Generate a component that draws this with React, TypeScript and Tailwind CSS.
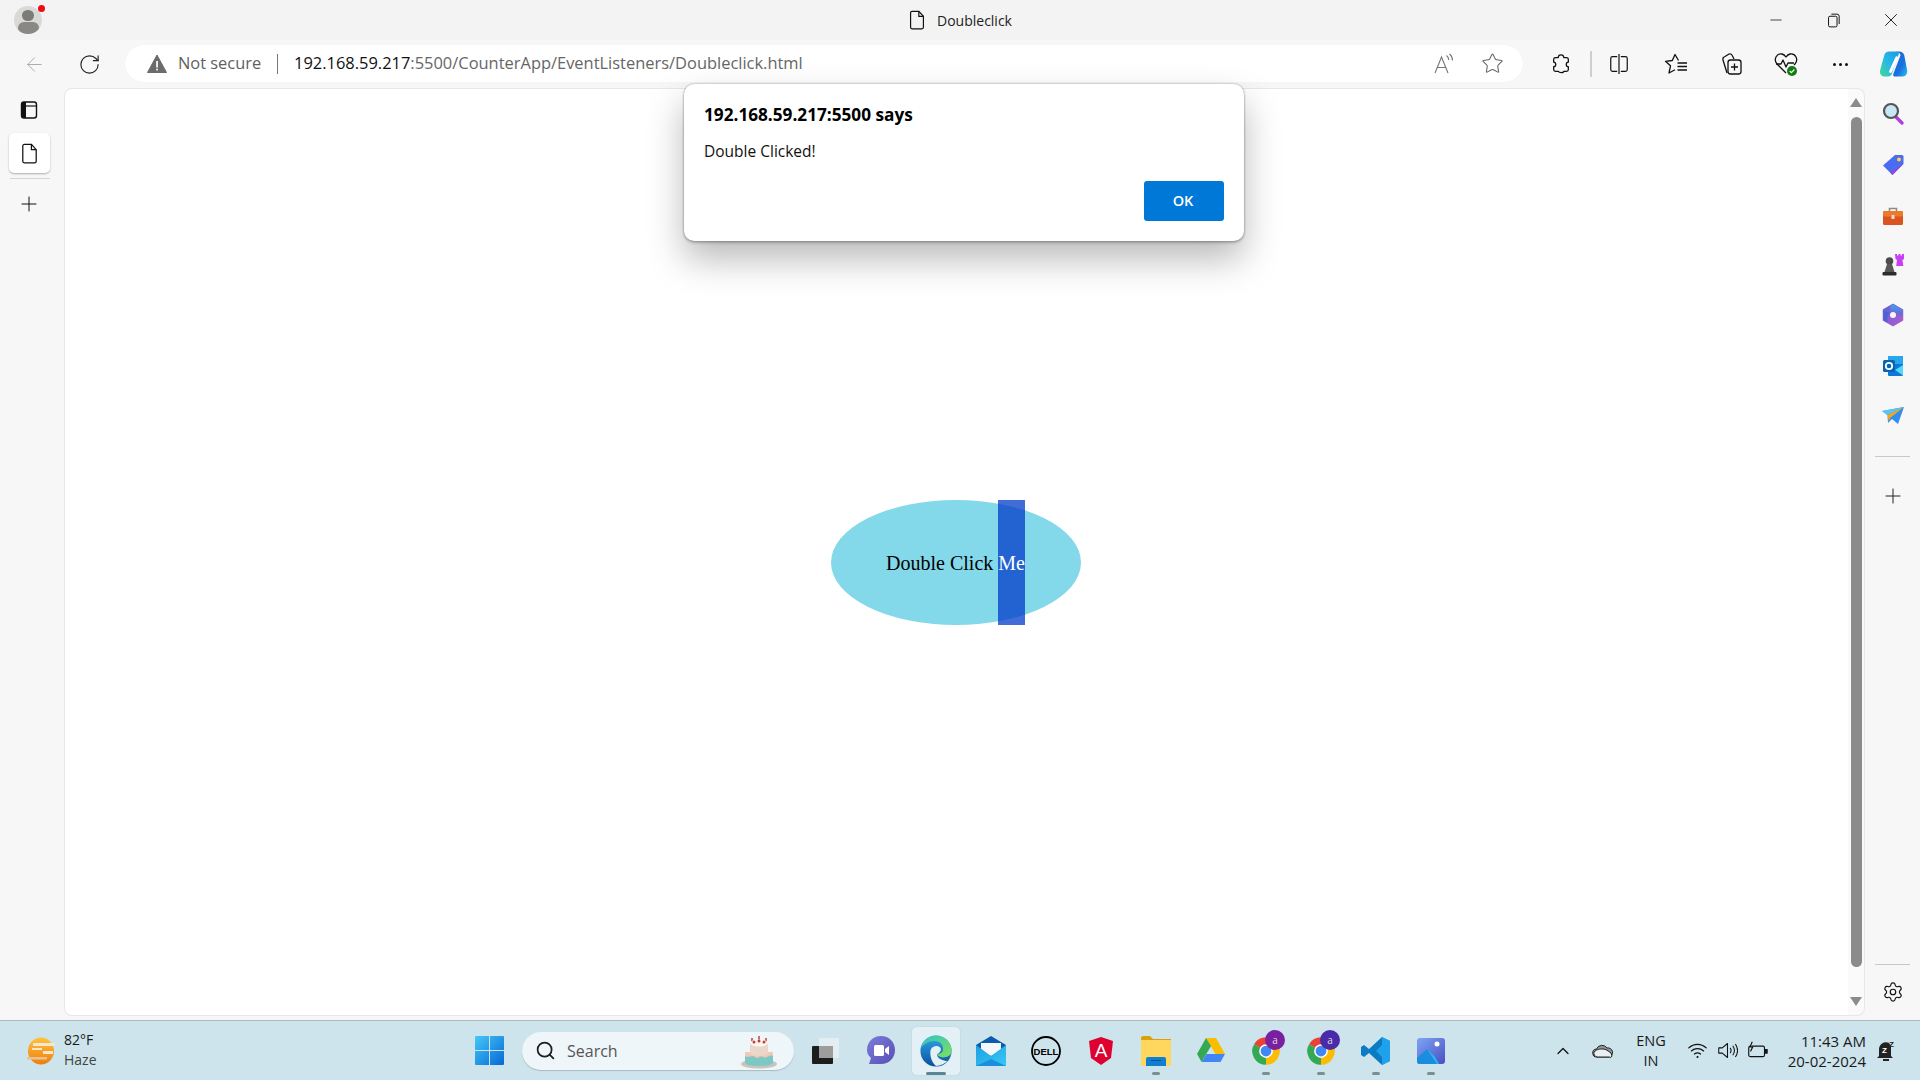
import React from "react";
import { ArrowLeft, RotateCw, Star, Plus, Settings, ChevronUp, Search, Minus, X } from "lucide-react";

const Slot = ({ w = "w-[55px]", children }: { w?: string; children: React.ReactNode }) => (
  <div className={`${w} h-full shrink-0 flex items-center justify-center relative`}>{children}</div>
);

const Pip = ({ active }: { active?: boolean }) => (
  <span className={`absolute bottom-[5px] left-1/2 -translate-x-1/2 h-[3px] rounded-full ${active ? "w-[20px] bg-[#5b8592]" : "w-[8px] bg-[#7c8d93]"}`} />
);

const S = ({ size = 20, vb = "0 0 24 24", children }: { size?: number; vb?: string; children: React.ReactNode }) => (
  <svg width={size} height={size} viewBox={vb} fill="none" stroke="none">{children}</svg>
);

const DocIcon = ({ size = 20, sw = 1.3 }: { size?: number; sw?: number }) => (
  <S size={size}>
    <path d="M6.500 2.500H14l5 5.500v12a1.700 1.700 0 0 1-1.700 1.700H6.700A1.700 1.700 0 0 1 5 20V4a1.500 1.500 0 0 1 1.500-1.500z" stroke="#111" strokeWidth={sw} />
    <path d="M14 2.500V8h5" stroke="#111" strokeWidth={sw} />
  </S>
);

const Copilot = () => (
  <S size={30}>
    <defs>
      <linearGradient id="cp1" x1="0" y1="0" x2="1" y2="1"><stop offset="0" stopColor="#1670c4" /><stop offset="0.6" stopColor="#1b6fe0" /><stop offset="1" stopColor="#28c4ee" /></linearGradient>
      <linearGradient id="cp2" x1="0" y1="1" x2="1" y2="0"><stop offset="0" stopColor="#45d98f" /><stop offset="0.5" stopColor="#26b8e8" /><stop offset="1" stopColor="#1a9ae0" /></linearGradient>
    </defs>
    <path d="M9 2h6c1.500 0 2 1 1.500 2.300L11 20c-.6 1.500-1.800 2-3 2H5c-2.500 0-4-2.500-3.300-5L5 5c.6-2 2-3 4-3z" fill="url(#cp2)" />
    <path d="M14 2h3c2 0 3.300 1 4 3l2.300 12c.5 2.500-1 5-3.500 5h-6c-1.500 0-2-1-1.500-2.300L18 5c-.6-2-2-3-4-3z" fill="url(#cp1)" />
    <path d="M15 7 10 18" stroke="#fff" strokeWidth="2.400" strokeLinecap="round" />
  </S>
);

const ProfileIcon = () => (
  <div className="relative w-[28px] h-[28px]">
    <div className="w-[28px] h-[28px] rounded-full bg-[#d9d9d7] overflow-hidden flex flex-col items-center">
      <div className="w-[12px] h-[12px] rounded-full bg-[#7d7b78] mt-[4px]" />
      <div className="w-[21px] h-[14px] rounded-full bg-[#8a8884] mt-[1px]" />
    </div>
    <div className="absolute top-[-1px] right-[-3px] w-[7px] h-[7px] rounded-full bg-[#ee0b14]" />
  </div>
);

const TitleBar = () => (
  <div className="h-[40px] bg-[#f3f3f3] flex items-center shrink-0">
    <div className="w-[56px] flex justify-center"><ProfileIcon /></div>
    <div className="flex-1 flex items-center ml-[850px] gap-[9px]">
      <DocIcon size={22} />
      <span className="text-[14px] text-[#222]">Doubleclick</span>
    </div>
    <div className="flex items-center h-full">
      <Slot w="w-[58px]"><Minus size={18} strokeWidth={1} color="#111" className="ml-[2px]" /></Slot>
      <Slot w="w-[58px]">
        <S size={17}>
          <rect x="5" y="6" width="12" height="15" rx="2" stroke="#111" strokeWidth="1.400" />
          <path d="M9 3h8a3 3 0 0 1 3 3v11" stroke="#111" strokeWidth="1.400" />
        </S>
      </Slot>
      <Slot w="w-[58px]"><X size={22} strokeWidth={1} color="#111" /></Slot>
    </div>
  </div>
);

const Toolbar = () => (
  <div className="h-[48px] bg-[#f7f7f7] flex items-center shrink-0 pl-[7px]">
    <Slot><ArrowLeft size={23} strokeWidth={1} color="#a8a8a8" /></Slot>
    <Slot><RotateCw size={23} strokeWidth={1.2} color="#222" /></Slot>
    <div className="ml-[8px] w-[1398px] h-[37px] -mt-[1px] bg-white rounded-full flex items-center shadow-[0_0_1px_rgba(0,0,0,0.06)] shrink-0">
      <svg className="ml-[22px]" width="20" height="20" viewBox="0 0 20 20">
        <path d="M10 1 19.500 18.500H.5z" fill="#6b6b6b" stroke="#6b6b6b" strokeLinejoin="round" />
        <rect x="9.200" y="7" width="1.700" height="6.500" fill="#fff" />
        <rect x="9.200" y="14.700" width="1.700" height="1.700" fill="#fff" />
      </svg>
      <span className="ml-[11px] text-[16.4px] text-[#5f5f5f] w-[99px] whitespace-nowrap">Not secure</span>
      <span className="w-[1px] h-[20px] bg-[#777]" />
      <span className="ml-[16px] text-[16.45px] text-[#666] whitespace-nowrap"><span className="text-[#111]">192.168.59.217</span>:5500/CounterApp/EventListeners/Doubleclick.html</span>
      <div className="flex-1" />
      <svg className="mr-[25px]" width="24" height="24" viewBox="0 0 24 24" fill="none" stroke="#777" strokeWidth="1.100">
        <path d="M3 21 9.500 5 16 21M5.500 15.500h8" />
        <path d="M14.500 3.500c1.500 1 2.200 2.500 2.200 4.500M17.500 2c2 1.500 3 3.500 3 6.500" />
      </svg>
      <Star size={23} strokeWidth={1.1} color="#666" className="mr-[19px]" />
    </div>
    <div className="ml-[10px] flex items-center h-full">
      <Slot>
        <svg width="22" height="22" viewBox="0 0 24 24" fill="none" stroke="#111" strokeWidth="1.400" strokeLinejoin="round">
          <path d="M9 5c0-4 6-4 6 0h3a2 2 0 0 1 2 2v3c-3 0-3 5 0 5v3a2 2 0 0 1-2 2h-3c0 2-5 2-6 0H6a2 2 0 0 1-2-2v-3c3 0 3-5 0-5V7a2 2 0 0 1 2-2z" />
        </svg>
      </Slot>
      <span className="ml-[2px] w-[2px] h-[26px] bg-[#cfcfcf]" />
      <Slot w="w-[54px]">
        <svg width="22" height="22" viewBox="0 0 24 24" fill="none" stroke="#111" strokeWidth="1.300">
          <path d="M10 4H5a2 2 0 0 0-2 2v12a2 2 0 0 0 2 2h5M14 4h5a2 2 0 0 1 2 2v12a2 2 0 0 1-2 2h-5M12 1v22" />
        </svg>
      </Slot>
      <div className="ml-[2px]" />
      <Slot>
        <svg width="24" height="24" viewBox="0 0 24 24" fill="none" stroke="#111" strokeWidth="1.300" strokeLinejoin="round">
          <path d="M14.500 8.500 11 2.500 8.300 8.500 1.500 9.300l5 4.500L5 21l6-3.200" />
          <path d="M13.500 11H23M13.500 14.500H23M13.500 18H23" />
        </svg>
      </Slot>
      <Slot>
        <svg width="24" height="24" viewBox="0 0 24 24" fill="none" stroke="#111" strokeWidth="1.300" strokeLinejoin="round">
          <path d="M8 21 4 8c-.5-2 .5-3 2-3.500L10 2c1.500-.5 3 .5 3.500 2L15 7" />
          <rect x="9" y="8" width="13" height="14" rx="2.500" />
          <path d="M15.500 11.500v7M12 15h7" />
        </svg>
      </Slot>
      <Slot>
        <svg width="26" height="26" viewBox="0 0 26 26" fill="none" stroke="#111" strokeWidth="1.300" strokeLinejoin="round">
          <path d="M13 22 4 13C0 8 4 2 9 3c2 .4 3 1.500 4 3 1-1.500 2-2.600 4-3 5-1 9 5 5 10l-1 1" />
          <path d="M3 13h5l2-4 3 7 2-4h6" />
          <circle cx="19" cy="20" r="5" fill="#107c10" stroke="none" />
          <path d="m16.800 20 1.600 1.700 3-3.200" stroke="#fff" strokeWidth="1.200" />
        </svg>
      </Slot>
      <Slot>
        <div className="flex gap-[3px]">
          <span className="w-[3px] h-[3px] rounded-full bg-[#111]" />
          <span className="w-[3px] h-[3px] rounded-full bg-[#111]" />
          <span className="w-[3px] h-[3px] rounded-full bg-[#111]" />
        </div>
      </Slot>
      <Slot w="w-[49px]"><Copilot /></Slot>
    </div>
  </div>
);

const LeftRail = () => (
  <div className="w-[64px] shrink-0 flex flex-col">
    <div className="w-[58px] flex justify-center pt-[12px]">
      <svg width="20" height="20" viewBox="0 0 20 20" fill="none">
        <rect x="2.500" y="2" width="15" height="16" rx="2.500" stroke="#111" strokeWidth="1.400" />
        <path d="M2.500 6h15" stroke="#111" strokeWidth="1.200" />
        <path d="M2.500 4.500a2.500 2.500 0 0 1 2.500-2.500h2v16H5a2.500 2.500 0 0 1-2.500-2.500z" fill="#111" />
      </svg>
    </div>
    <div className="ml-[9px] mt-[13px] w-[41px] h-[40px] rounded-[5px] bg-white shadow-[0_1px_2px_rgba(0,0,0,0.3)] flex items-center justify-center"><DocIcon size={23} /></div>
    <div className="ml-[10px] mt-[5px] w-[40px] h-[1px] bg-[#d4d4d4]" />
    <div className="w-[58px] flex justify-center mt-[13px]"><Plus size={24} strokeWidth={1} color="#111" /></div>
  </div>
);

const Scrollbar = () => (
  <div className="w-[17px] shrink-0 bg-[#fafafa] rounded-r-[8px] border-y border-r border-[#e7e7e7] flex flex-col items-center pt-[9px] pb-[9px]">
    <div className="w-0 h-0 border-l-[6.5px] border-r-[6.5px] border-b-[9px] border-l-transparent border-r-transparent border-b-[#8b8b8b]" />
    <div className="w-[11px] flex-1 mt-[10px] mb-[30px] rounded-full bg-[#8b8b8b]" />
    <div className="w-0 h-0 border-l-[6.5px] border-r-[6.5px] border-t-[9px] border-l-transparent border-r-transparent border-t-[#8b8b8b]" />
  </div>
);

const AlertDialog = () => (
  <div className="absolute left-[620px] top-[-4px] w-[560px] h-[157px] bg-white rounded-[10px] shadow-[0_0_2px_rgba(0,0,0,0.4),0_2px_3px_rgba(0,0,0,0.2),0_18px_36px_rgba(0,0,0,0.28)] px-[20px] pt-[19px]">
    <div className="text-[17.2px] leading-[24px] font-bold text-black">192.168.59.217:5500 says</div>
    <div className="mt-[14px] text-[15.5px] leading-[20px] text-[#111]">Double Clicked!</div>
    <div className="flex justify-end">
      <div className="mt-[20px] w-[80px] h-[40px] rounded-[3px] bg-[#0078d7] text-white text-[14.5px] font-semibold flex items-center justify-center pr-[2px]">OK</div>
    </div>
  </div>
);

const Page = () => (
  <div className="flex-1 relative flex min-w-0 mb-[4px]">
    <div className="flex-1 bg-white border-y border-l border-[#e7e7e7] rounded-l-[8px] flex justify-center pt-[411px] pr-[2px] min-w-0">
      <div className="w-[250px] h-[125px] rounded-[50%] bg-[#83d8ea] flex items-center justify-center font-['Liberation_Serif',serif] text-[20px] text-black">
        <span className="whitespace-pre">Double Click </span>
        <span className="self-stretch flex items-center bg-[rgba(0,57,200,0.74)] text-white">Me</span>
      </div>
    </div>
    <Scrollbar />
    <AlertDialog />
  </div>
);

const Ext = ({ children, mt }: { children: React.ReactNode; mt: string }) => (
  <div className={`${mt} flex justify-center`}>{children}</div>
);

const RightRail = () => (
  <div className="w-[55px] shrink-0 flex flex-col items-stretch">
    <Ext mt="mt-[13px]">
      <S size={24}>
        <path d="m14 15 7 7" stroke="#b13ae0" strokeWidth="3.200" strokeLinecap="round" />
        <circle cx="10" cy="10" r="7" fill="#c8e6f6" stroke="#555" strokeWidth="2.200" />
      </S>
    </Ext>
    <Ext mt="mt-[28px]">
      <S size={24}>
        <path d="M14 2h7a1.500 1.500 0 0 1 1.500 1.500V11L11.500 22 2 12.500z" fill="#4a6cf0" />
        <path d="m22.500 10.500-11 11.500-2-2z" fill="#a13fe0" />
        <circle cx="18" cy="6.500" r="2" fill="#ffd23f" />
      </S>
    </Ext>
    <Ext mt="mt-[27px]">
      <S size={24}>
        <path d="M8.500 7V4.500h7V7" stroke="#8d8d8d" strokeWidth="1.600" />
        <rect x="2" y="7" width="20" height="14" rx="1.500" fill="#d9541e" />
        <rect x="2" y="7" width="20" height="5.500" rx="1.500" fill="#ed7a2c" />
        <rect x="10.500" y="11" width="3" height="4" fill="#e8dccb" />
      </S>
    </Ext>
    <Ext mt="mt-[25px]">
      <S size={24}>
        <path d="M14 1h2v1.500h1.500V1h2v1.500H21V1h2v5l-1.500 1 .8 6H15.200l.8-6L14.500 6z" fill="#c840f5" />
        <circle cx="8.500" cy="8" r="3.800" fill="#4c4c4c" />
        <path d="M6 11h5l2.500 8h-10z" fill="#585858" />
        <rect x="1.500" y="19" width="14" height="3.500" rx="1" fill="#2c2c2c" />
      </S>
    </Ext>
    <Ext mt="mt-[26px]">
      <S size={24}>
        <defs>
          <linearGradient id="m1" x1="0" y1="0" x2="1" y2="1"><stop offset="0" stopColor="#5e5fd8" /><stop offset="1" stopColor="#b15ecf" /></linearGradient>
          <linearGradient id="m2" x1="0" y1="0" x2="0" y2="1"><stop offset="0" stopColor="#3ea3e8" /><stop offset="1" stopColor="#6a62d8" /></linearGradient>
        </defs>
        <path d="M12 1.500 21.500 7v10L12 22.500 2.500 17V7z" fill="url(#m1)" stroke="url(#m1)" strokeWidth="1.500" strokeLinejoin="round" />
        <path d="M12 1.500 21.500 7v6l-6-3a4 4 0 0 0-6 0V3z" fill="url(#m2)" />
        <path d="M2.500 8v9l5 3c-2-3-2-8 2-10z" fill="#4a62d8" />
        <circle cx="12" cy="12" r="3" fill="#f7f7f7" />
      </S>
    </Ext>
    <Ext mt="mt-[27px]">
      <S size={24}>
        <rect x="7" y="2" width="15" height="10" fill="#28a8ea" />
        <path d="M7 10h15v11a1 1 0 0 1-1 1H8a1 1 0 0 1-1-1z" fill="#0f78d4" />
        <path d="M22 11v10.500L14 16z" fill="#50d9ff" />
        <rect x="2" y="6" width="12" height="12" rx="1.500" fill="#0364b8" />
        <circle cx="8" cy="12" r="3.200" stroke="#fff" strokeWidth="1.800" />
      </S>
    </Ext>
    <Ext mt="mt-[25px]">
      <S size={24}>
        <path d="M1 8 23 4 17 21 11 16l-4 4-.5-8z" fill="#2f8ef0" />
        <path d="M1 8 23 4 6.500 12z" fill="#59c4f5" />
        <path d="M6.500 12 23 4 9 15l-1 4z" fill="#f3a71e" />
      </S>
    </Ext>
    <div className="mt-[29px] ml-[10px] w-[35px] h-[1px] bg-[#c8c8c8]" />
    <div className="mt-[27px] flex justify-center"><Plus size={24} strokeWidth={1} color="#222" /></div>
    <div className="flex-1" />
    <div className="ml-[10px] w-[35px] h-[1px] bg-[#c8c8c8]" />
    <div className="mt-[16px] mb-[17px] flex justify-center"><Settings size={22} strokeWidth={1.3} color="#111" /></div>
  </div>
);

const Chrome = ({ color }: { color: string }) => (
  <>
    <S size={30}>
      <path d="M12 12 2.470 6.500A11 11 0 0 1 21.530 6.500z" fill="#ea4335" />
      <path d="M12 12 21.530 6.500A11 11 0 0 1 12 23z" fill="#fbbc04" />
      <path d="M12 12 12 23A11 11 0 0 1 2.470 6.500z" fill="#34a853" />
      <circle cx="12" cy="12" r="5.500" fill="#fff" />
      <circle cx="12" cy="12" r="4.300" fill="#4285f4" />
    </S>
    <span className="absolute top-[9px] right-[8px] w-[20px] h-[20px] rounded-full text-[10px] flex items-center justify-center text-[#ddd]" style={{ backgroundColor: color }}>a</span>
  </>
);

const Taskbar = () => (
  <div className="h-[60px] shrink-0 bg-[#cde4ec] border-t border-[#a9bcc3] flex items-center">
    <div className="w-[27px]" />
    <svg width="28" height="30" viewBox="0 0 28 30">
      <defs><linearGradient id="w1" x1="0" y1="0" x2="0" y2="1"><stop offset="0" stopColor="#fcc43c" /><stop offset="1" stopColor="#ef7d12" /></linearGradient></defs>
      <ellipse cx="14" cy="15" rx="13" ry="13.500" fill="url(#w1)" />
      <rect x="6" y="7" width="22" height="3" fill="#f6e7cc" />
      <rect x="5" y="12" width="10" height="2" fill="#f6e7cc" />
      <rect x="16" y="15" width="10" height="3" fill="#f6e7cc" />
      <rect x="0" y="21" width="20" height="2.500" fill="#e8c38f" />
    </svg>
    <div className="ml-[9px] w-[55px] flex flex-col text-[14px] leading-[20px] -mt-[1px]">
      <span className="text-[#1a1a1a]">82°F</span>
      <span className="text-[#444]">Haze</span>
    </div>
    <div className="w-[356px]" />
    <S size={29} vb="0 0 29 29">
      <defs><linearGradient id="st" x1="0" y1="0" x2="1" y2="1"><stop offset="0" stopColor="#45c8f8" /><stop offset="1" stopColor="#0668d4" /></linearGradient></defs>
      <path d="M0 1a1 1 0 0 1 1-1h13v14H0zM15 0h13a1 1 0 0 1 1 1v13H15zM0 15h14v14H1a1 1 0 0 1-1-1zM15 15h14v13a1 1 0 0 1-1 1H15z" fill="url(#st)" />
    </S>
    <div className="ml-[18px] w-[272px] h-[38px] rounded-full bg-[#eff6f9] shadow-[0_1px_1px_rgba(0,0,0,0.18)] flex items-center relative shrink-0">
      <Search size={21} strokeWidth={2} color="#1d1d1d" className="ml-[13px]" />
      <span className="ml-[11px] text-[16px] text-[#555]">Search</span>
      <div className="absolute left-[218px] top-[0px]">
        <svg width="38" height="38" viewBox="0 0 38 38">
          <path d="M12 6v5M19 4v6M26 6v5" stroke="#c43c3c" strokeWidth="1.500" />
          <ellipse cx="19" cy="32" rx="18" ry="4.500" fill="#c9c4bb" />
          <path d="M5 20h28v10c0 3-6 4-14 4S5 33 5 30z" fill="#7dc7c5" />
          <path d="M5 24c4 3 6-2 10 1s4-2 8 0 6-3 10-1v-4H5z" fill="#f0c8b8" />
          <path d="M10 11h18v10c0 2-4 3-9 3s-9-1-9-3z" fill="#ecd6c9" />
          <ellipse cx="19" cy="11" rx="9" ry="3.500" fill="#fbf7f2" />
          <circle cx="14" cy="10" r="1.500" fill="#c43c3c" /><circle cx="19" cy="9" r="1.500" fill="#c43c3c" /><circle cx="24" cy="10" r="1.500" fill="#c43c3c" />
        </svg>
      </div>
    </div>
    <div className="ml-[4px] flex h-full items-center">
      <Slot>
        <svg width="27" height="27" viewBox="0 0 27 27">
          <rect x="0" y="9" width="21" height="18" rx="1" fill="#1d1d1d" />
          <rect x="7" y="1" width="20" height="20" rx="1" fill="#e8eef0" fillOpacity="0.85" />
          <rect x="7" y="9" width="14" height="12" fill="#9d9d9d" />
        </svg>
      </Slot>
      <Slot>
        <svg width="30" height="34" viewBox="0 0 30 34">
          <defs><linearGradient id="tm" x1="0" y1="0" x2="1" y2="1"><stop offset="0" stopColor="#7a7ddb" /><stop offset="1" stopColor="#5a4fb5" /></linearGradient></defs>
          <path d="M15 2c8 0 14 6 14 14s-6 14-14 14H3l2-6C2 21 1 19 1 16 1 8 7 2 15 2z" fill="url(#tm)" />
          <rect x="8" y="11" width="10" height="11" rx="1.500" fill="#fff" />
          <path d="m19 15 4-3v9l-4-3z" fill="#fff" />
        </svg>
      </Slot>
      <Slot>
        <div className="w-[48px] h-[48px] rounded-[4px] bg-[#e3f0f5] shadow-[0_0_1px_rgba(0,0,0,0.25)] flex items-center justify-center">
          <S size={34}>
            <defs>
              <linearGradient id="ed" x1="0" y1="0" x2="0" y2="1"><stop offset="0" stopColor="#2ea9ea" /><stop offset="1" stopColor="#0b4f9c" /></linearGradient>
              <linearGradient id="eg" x1="0" y1="0" x2="1" y2="1"><stop offset="0" stopColor="#2ec4c8" /><stop offset="1" stopColor="#7fe05a" /></linearGradient>
            </defs>
            <circle cx="12" cy="12" r="11" fill="url(#ed)" />
            <path d="M12 1a11 11 0 0 1 11 11c0 3-3 4.500-6 4.500-2.500 0-4-1-4-2.500 2 0 4-1 4-3.500C17 7 14 5 11 5 7 5 3.500 7 1.500 10 2.500 5 7 1 12 1z" fill="url(#eg)" />
            <path d="M8 13c0-3 2-4.500 4.500-4.500 1.500 0 3 1 3 2.500 0 1.500-2 3-2.500 3-1 2 2 5 7 5-2 2-5 3.500-8 3.500C9 20 8 16 8 13z" fill="#e3f0f5" />
          </S>
        </div>
        <Pip active />
      </Slot>
      <Slot>
        <svg width="30" height="32" viewBox="0 0 30 32">
          <defs><linearGradient id="ml" x1="0" y1="0" x2="1" y2="1"><stop offset="0" stopColor="#1e9fe0" /><stop offset="1" stopColor="#38c8f5" /></linearGradient></defs>
          <path d="M15 1 30 10v21H0V10z" fill="#0b5cab" />
          <path d="M5 8h20v8L15 21 5 16z" fill="#f4f7f9" />
          <path d="M0 10v21h30V10L15 21z" fill="url(#ml)" />
          <path d="M0 31 15 24l15 7z" fill="#1a8fdc" />
        </svg>
      </Slot>
      <Slot>
        <svg width="30" height="30" viewBox="0 0 30 30">
          <circle cx="15" cy="15" r="14" fill="none" stroke="#000" strokeWidth="1.800" />
          <text x="15" y="18.500" textAnchor="middle" fontFamily="Liberation Sans" fontWeight="700" fontSize="9.500" fill="#000">DELL</text>
        </svg>
      </Slot>
      <Slot>
        <svg width="24" height="28" viewBox="0 0 24 28">
          <path d="M12 0 24 4l-2 17-10 7-10-7L0 4z" fill="#dd0031" />
          <text x="12" y="20" textAnchor="middle" fontFamily="Liberation Sans" fontSize="19" fill="#fff">A</text>
        </svg>
      </Slot>
      <Slot>
        <svg width="30" height="30" viewBox="0 0 30 30">
          <path d="M0 2a2 2 0 0 1 2-2h7l3 3h18v6H0z" fill="#dba10c" />
          <rect x="0" y="4" width="30" height="26" rx="1" fill="#ffd75e" />
          <path d="M5 30V23a2 2 0 0 1 2-2h16a2 2 0 0 1 2 2v7z" fill="#0f7fd0" />
          <rect x="10" y="24" width="10" height="1" fill="#0b4f9c" />
        </svg>
        <Pip />
      </Slot>
      <Slot>
        <svg width="28" height="26" viewBox="0 0 28 26">
          <path d="M9 0h10l9 16h-9.500z" fill="#fbbc04" />
          <path d="M9 0 0 16l4.500 8 9.500-16z" fill="#34a853" />
          <path d="M9.500 16H28l-4.500 8H4.500z" fill="#4285f4" />
        </svg>
      </Slot>
      <Slot><Chrome color="#7b1fa2" /><Pip /></Slot>
      <Slot><Chrome color="#4a2aa8" /><Pip /></Slot>
      <Slot>
        <svg width="30" height="30" viewBox="0 0 30 30">
          <path d="M21 1 29 5v20l-8 4-13-12-5 4-3-2V11l3-2 5 4z" fill="#0b7cc4" />
          <path d="M21 1 29 5v20l-8 4V21l-6-6 6-6z" fill="#1fa2ec" />
        </svg>
        <Pip />
      </Slot>
      <Slot>
        <svg width="28" height="26" viewBox="0 0 28 26">
          <defs><linearGradient id="ph" x1="0" y1="0" x2="1" y2="1"><stop offset="0" stopColor="#7da6f5" /><stop offset="1" stopColor="#4a4fc4" /></linearGradient></defs>
          <rect width="28" height="26" rx="3" fill="url(#ph)" />
          <circle cx="20" cy="6" r="2.500" fill="#fff" />
          <path d="M0 24 10 11l8 8 4 7H3a3 3 0 0 1-3-2z" fill="#2ab8ee" />
          <path d="M0 20 10 11 20 26H3a3 3 0 0 1-3-3z" fill="#1b8de0" />
        </svg>
        <Pip />
      </Slot>
    </div>
    <div className="flex-1" />
    <div className="w-[40px] flex justify-center"><ChevronUp size={20} strokeWidth={1.5} color="#111" /></div>
    <div className="w-[40px] flex justify-center">
      <svg width="22" height="14" viewBox="0 0 22 14">
        <path d="M5 13a4 4 0 0 1-.5-8A6 6 0 0 1 15 4a4.500 4.500 0 0 1 2 9z" fill="#8f9698" stroke="#222" strokeWidth="1" />
        <path d="M2 8c3-3 6-3 9-3s5 2 8 4l1 3a2 2 0 0 1-3 1H5a4 4 0 0 1-3-5z" fill="#e9eef0" stroke="#222" strokeWidth="1" />
      </svg>
    </div>
    <div className="w-[56px] text-center text-[14.5px] leading-[20px] text-[#1a1a1a] flex flex-col">
      <span>ENG</span>
      <span>IN</span>
    </div>
    <div className="ml-[8px] flex items-center gap-[9px]">
      <svg width="21" height="21" viewBox="0 0 24 24" fill="none" stroke="#111" strokeWidth="1.400" strokeLinecap="round">
        <path d="M2 9c6-5.500 14-5.500 20 0M5 12.500c4-3.500 10-3.500 14 0M8.500 16c2-1.500 5-1.500 7 0" />
        <circle cx="12" cy="19.500" r="1.200" fill="#111" stroke="none" />
      </svg>
      <svg width="21" height="21" viewBox="0 0 24 24" fill="none" stroke="#111" strokeWidth="1.200" strokeLinejoin="round">
        <path d="M2 9v6h4l6 5V4L6 9z" />
        <path d="M15 9c1.500 2 1.500 4 0 6M18 6.500c2.500 3.500 2.500 7.500 0 11M21 4.500c3 4.500 3 10.500 0 15" />
      </svg>
      <svg width="21" height="21" viewBox="0 0 24 24" fill="none" stroke="#111" strokeWidth="1.300">
        <rect x="2" y="7" width="18" height="12" rx="2" />
        <rect x="21" y="11" width="2" height="4" fill="#111" />
        <path d="M6 2 3.500 8h3L4 13" fill="#cde4ec" />
      </svg>
    </div>
    <div className="w-[98px] text-right text-[15px] leading-[20px] text-[#1a1a1a] flex flex-col whitespace-nowrap">
      <span>11:43 AM</span>
      <span>20-02-2024</span>
    </div>
    <div className="w-[40px] flex justify-center">
      <svg width="20" height="22" viewBox="0 0 20 22">
        <path d="M3 16V9a7 7 0 0 1 10-6l2 3v10l2 2H1z" fill="#222" />
        <rect x="7" y="19" width="6" height="2" fill="#222" />
        <text x="6" y="13" fontFamily="Liberation Sans" fontWeight="700" fontSize="8" fill="#fff">Z</text>
        <text x="13" y="7" fontFamily="Liberation Sans" fontWeight="700" fontSize="8" fill="#222">Z</text>
      </svg>
    </div>
    <div className="w-[14px]" />
  </div>
);

export default function App() {
  return (
    <div className="w-[1920px] h-[1080px] overflow-hidden flex flex-col bg-[#f7f7f7] font-['Open_Sans',sans-serif]">
      <TitleBar />
      <Toolbar />
      <div className="flex-1 flex min-h-0">
        <LeftRail />
        <Page />
        <RightRail />
      </div>
      <Taskbar />
    </div>
  );
}
